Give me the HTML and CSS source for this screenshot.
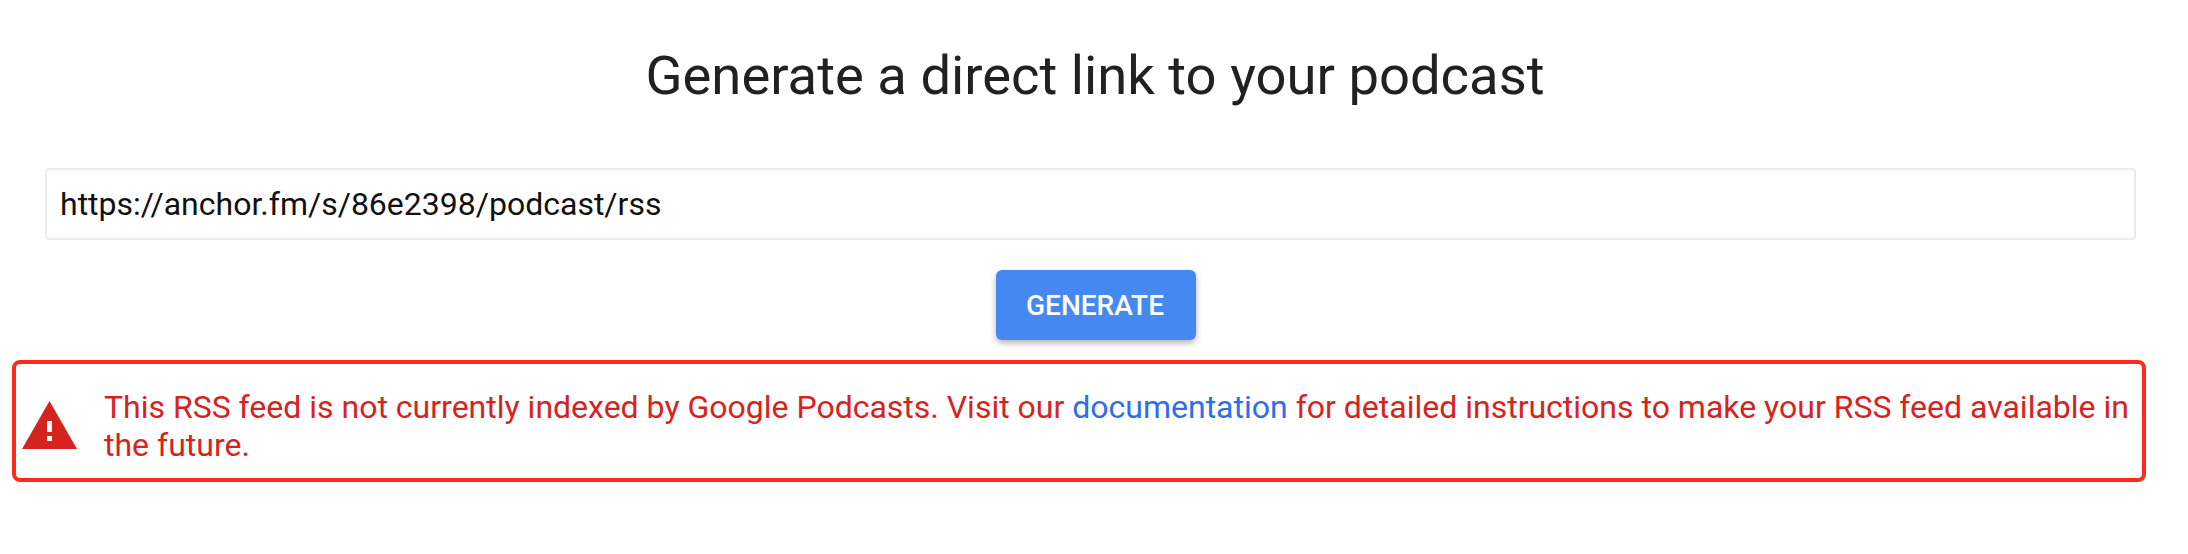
FILE: index.html
```html
<!DOCTYPE html>
<html lang="en">
<head>
  <meta charset="UTF-8" />
  <title>Generate a direct link to your podcast</title>
  <link rel="stylesheet" href="styles.css">
</head>
<body>

  <div class="container">
    <h1>Generate a direct link to your podcast</h1>

    <!-- Feed url form -->
    <div class="form">
      <input class="feed-input" type="text" value="https://anchor.fm/s/86e2398/podcast/rss" />
      <button class="generate-btn">Generate</button>
    </div>

    <!-- Error message -->
    <div class="alert">
      <svg class="alert-icon" viewBox="0 0 55 48" width="55" height="48">
        <path d="M27.5 0L55 48H0z" fill="#d7231e"/>
        <rect x="25" y="20" width="5" height="11" fill="#fff"/>
        <rect x="25" y="35" width="5" height="5" fill="#fff"/>
      </svg>
      <p class="alert-text">This RSS feed is not currently indexed by Google Podcasts. Visit our <a href="#">documentation</a> for detailed instructions to make your RSS feed available in the future.</p>
    </div>
  </div>

</body>
</html>
```

FILE: styles.css
```css
body {
  margin: 0;
  background-color: #fff;
  font-family: Roboto, sans-serif;
}
.container {
  padding: 42px 42px 0 12px;
}
h1 {
  margin: 0 0 58px;
  padding-left: 32px;
  font-size: 54.4px;
  line-height: 68px;
  font-weight: 400;
  color: #212121;
  text-align: center;
}
.form {
  display: flex;
  flex-direction: column;
  align-items: center;
  gap: 30px;
  padding: 0 10px 0 33px;
}
.feed-input {
  box-sizing: border-box;
  width: 100%;
  height: 72px;
  padding: 0 13px;
  border: 2px solid #ebebeb;
  border-radius: 4px;
  font-family: inherit;
  font-size: 32px;
  color: #111;
}
.generate-btn {
  width: 200px;
  height: 70px;
  margin-left: 11px;
  padding: 0 2px 0 0;
  border: none;
  border-radius: 6px;
  background-color: #4688f1;
  color: #fff;
  font-family: inherit;
  font-size: 28px;
  font-weight: 500;
  text-transform: uppercase;
  box-shadow: 0 3px 6px rgba(0,0,0,0.3);
}
.alert {
  box-sizing: border-box;
  display: flex;
  align-items: center;
  gap: 27px;
  height: 122px;
  margin: 20px 0 0;
  padding: 8px 4px 0 6px;
  border: 4px solid #ff2a1d;
  border-radius: 8px;
}
.alert-icon {
  flex-shrink: 0;
}
.alert-text {
  margin: 0;
  padding-top: 2px;
  font-size: 32px;
  line-height: 38px;
  color: #d7231e;
}
.alert-text a {
  color: #2f6cf0;
  text-decoration: none;
}
```
